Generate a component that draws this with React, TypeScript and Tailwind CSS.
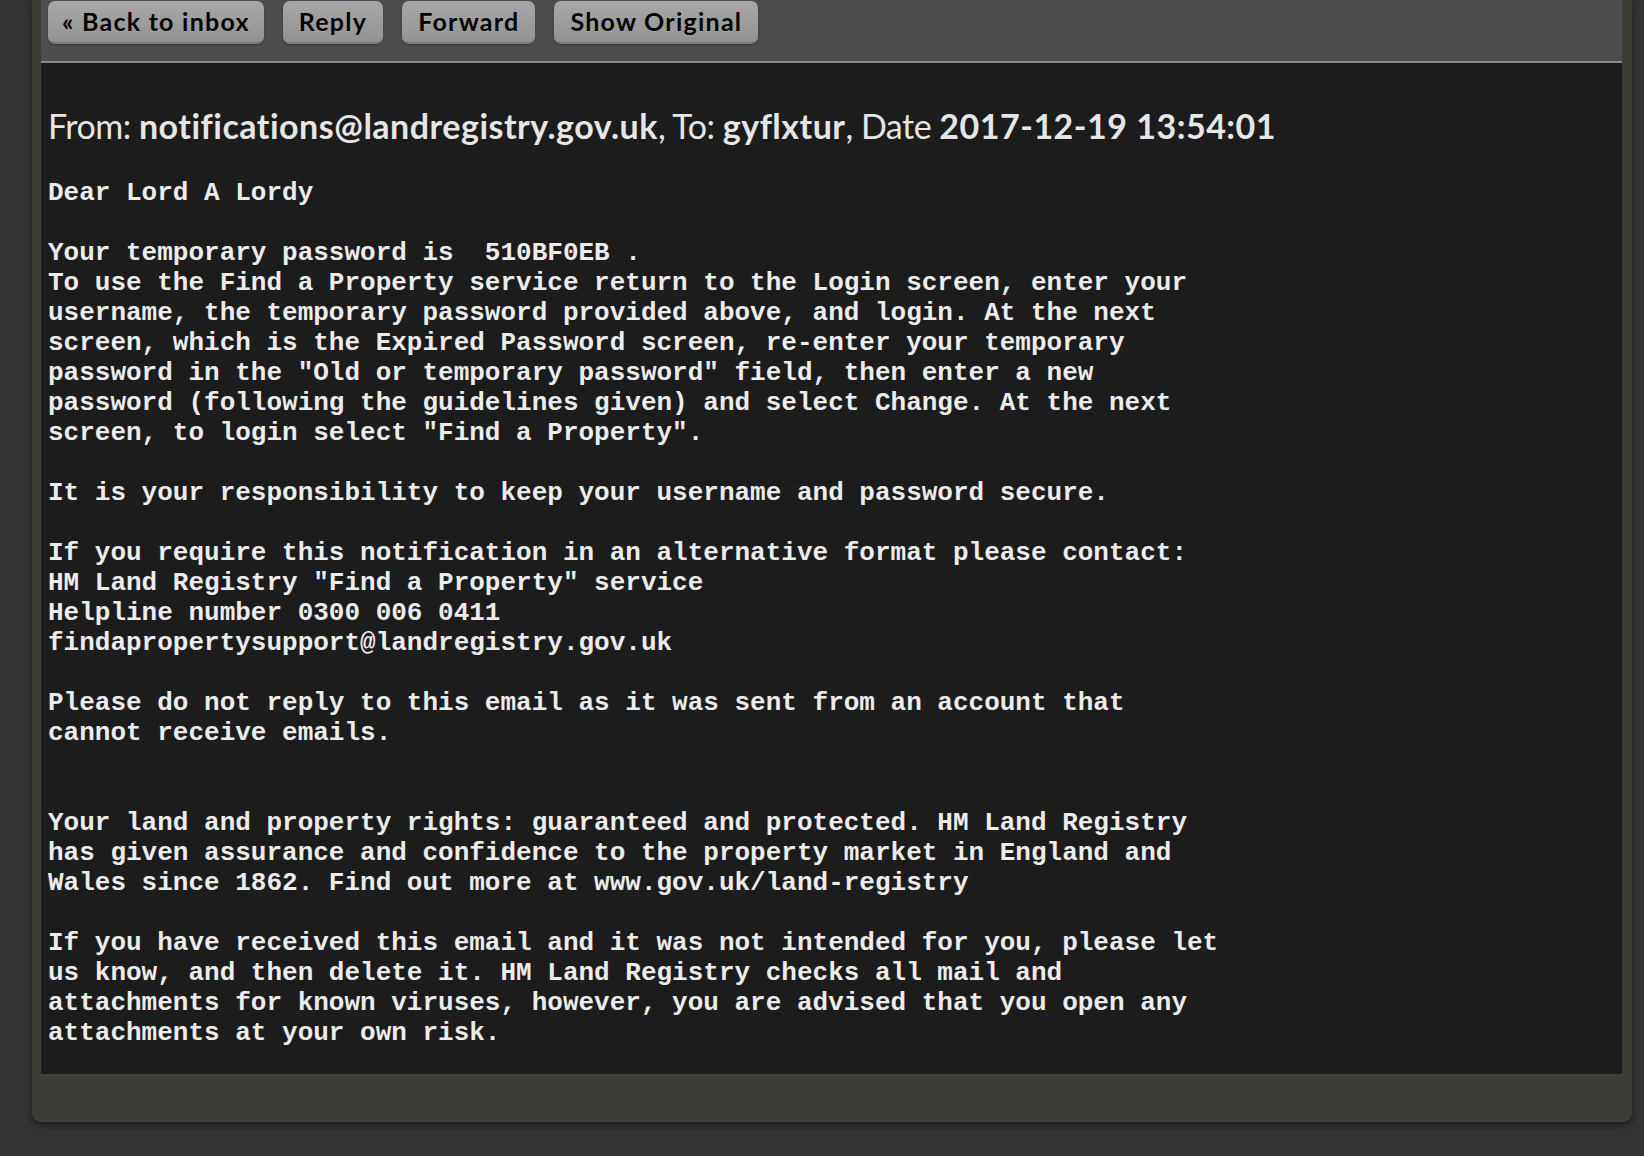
import React from "react";

const body = `Dear Lord A Lordy

Your temporary password is  510BF0EB .
To use the Find a Property service return to the Login screen, enter your
username, the temporary password provided above, and login. At the next
screen, which is the Expired Password screen, re-enter your temporary
password in the "Old or temporary password" field, then enter a new
password (following the guidelines given) and select Change. At the next
screen, to login select "Find a Property".

It is your responsibility to keep your username and password secure.

If you require this notification in an alternative format please contact:
HM Land Registry "Find a Property" service
Helpline number 0300 006 0411
findapropertysupport@landregistry.gov.uk

Please do not reply to this email as it was sent from an account that
cannot receive emails.


Your land and property rights: guaranteed and protected. HM Land Registry
has given assurance and confidence to the property market in England and
Wales since 1862. Find out more at www.gov.uk/land-registry

If you have received this email and it was not intended for you, please let
us know, and then delete it. HM Land Registry checks all mail and
attachments for known viruses, however, you are advised that you open any
attachments at your own risk.`;

function ToolButton({ children, first }: { children: React.ReactNode; first?: boolean }) {
  return (
    <button
      className={
        "h-[43px] rounded-[7px] border-b-2 border-[#7a7a7a] bg-gradient-to-b from-[#a8a8a8] to-[#939393] text-[25px] font-bold leading-none tracking-[1.25px] text-black shadow-[0_1px_2px_rgba(0,0,0,0.35)] [text-shadow:0_1px_0_rgba(255,255,255,0.15)] " +
        (first ? "px-[14px]" : "px-4")
      }
    >
      {children}
    </button>
  );
}

export default function App() {
  return (
    <div className="min-h-[1156px] bg-[#333333] pl-[32px] pr-[12px] pb-[33px] font-['Lato','Liberation_Sans',sans-serif]">
      <div className="rounded-b-[9px] bg-[#3d3e38] pl-[9px] pr-[10px] pb-[48px] shadow-[0_3px_6px_rgba(0,0,0,0.45)]">
        <div className="border-b-2 border-[#8a8a8a] bg-[#4d4d4d] pl-[7px] pt-px pb-[17px]">
          <div className="flex gap-[19px]">
            <ToolButton first>« Back to inbox</ToolButton>
            <ToolButton>Reply</ToolButton>
            <ToolButton>Forward</ToolButton>
            <ToolButton>Show Original</ToolButton>
          </div>
        </div>
        <div className="bg-[#1c1c1c] pl-[7px] pt-[43px] pb-[26px] text-[#e6e6e6]">
          <div className="text-[34px] leading-[40px] tracking-[-0.5px]">
            From: <span className="font-bold tracking-[0.5px]">notifications@landregistry.gov.uk</span>, To:{" "}
            <span className="font-bold tracking-[0.5px]">gyflxtur</span>, Date{" "}
            <span className="font-bold tracking-[0.5px]">2017-12-19 13:54:01</span>
          </div>
          <pre className="mt-[32px] font-['Liberation_Mono','Courier_New',monospace] text-[26px] font-bold leading-[30px] text-[#ececec]">
            {body}
          </pre>
        </div>
      </div>
    </div>
  );
}
